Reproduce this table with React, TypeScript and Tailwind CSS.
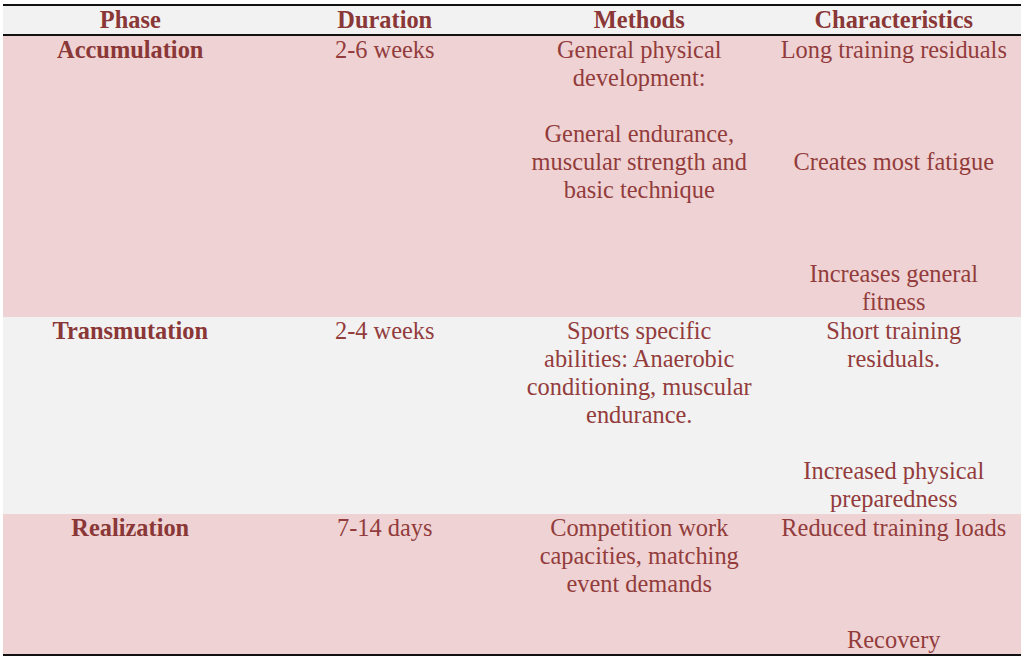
const HEADERS = ["Phase", "Duration", "Methods", "Characteristics"];

type Row = {
  phase: string;
  duration: string;
  methods: string[];
  chars: string[];
  bg: string;
  height: string;
};

// "" = empty line, keeps the vertical spacing of the original table
const ROWS: Row[] = [
  {
    phase: "Accumulation",
    duration: "2-6 weeks",
    methods: ["General physical", "development:", "", "General endurance,", "muscular strength and", "basic technique"],
    chars: ["Long training residuals", "", "", "", "Creates most fatigue", "", "", "", "Increases general", "fitness"],
    bg: "bg-[#efd3d4]",
    height: "h-[281px]",
  },
  {
    phase: "Transmutation",
    duration: "2-4 weeks",
    methods: ["Sports specific", "abilities: Anaerobic", "conditioning, muscular", "endurance."],
    chars: ["Short training", "residuals.", "", "", "", "Increased physical", "preparedness"],
    bg: "bg-[#f2f2f2]",
    height: "h-[197px]",
  },
  {
    phase: "Realization",
    duration: "7-14 days",
    methods: ["Competition work", "capacities, matching", "event demands"],
    chars: ["Reduced training loads", "", "", "", "Recovery"],
    bg: "bg-[#efd3d4]",
    height: "h-[140px]",
  },
];

function Lines({ lines }: { lines: string[] }) {
  return (
    <div className="flex flex-col items-center">
      {lines.map((l, i) => (
        <div key={i} className="h-[28px] leading-[28px] whitespace-nowrap">
          {l || "\u00a0"}
        </div>
      ))}
    </div>
  );
}

export default function App() {
  return (
    <div className="w-[1024px] h-[660px] bg-white pt-[4px] pl-[3px] font-[family-name:Liberation_Serif,serif] text-[24.4px]">
      <div className="w-[1018px]">
        <div className="h-[2px] bg-[#111]" />
        <div className="grid grid-cols-4 h-[28px] bg-[#f2f2f2] text-[#8a3737] font-bold">
          {HEADERS.map((h) => (
            <div key={h} className="text-center leading-[28px]">
              {h}
            </div>
          ))}
        </div>
        <div className="h-[2px] bg-[#111]" />
        {ROWS.map((row) => (
          <div key={row.phase} className={`grid grid-cols-4 ${row.bg} ${row.height} text-[#923c3c]`}>
            <div className="text-center leading-[28px] font-bold text-[#8a3737]">{row.phase}</div>
            <div className="text-center leading-[28px]">{row.duration}</div>
            <Lines lines={row.methods} />
            <Lines lines={row.chars} />
          </div>
        ))}
        <div className="h-[2px] bg-[#111]" />
      </div>
    </div>
  );
}
